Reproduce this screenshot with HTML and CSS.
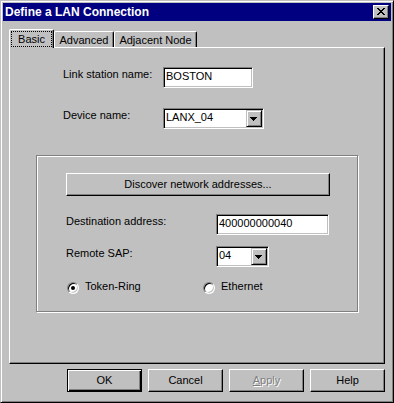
FILE: index.html
```html
<!DOCTYPE html>
<html lang="en">
<head>
    <meta charset="UTF-8">
    <meta name="viewport" content="width=device-width, initial-scale=1.0">
    <title>Define a LAN Connection</title>
    <link rel="stylesheet" href="styles.css">
</head>
<body>
<div class="window">
    <div class="titleBar">
        <span class="titleText">Define a LAN Connection</span>
        <button class="closeButton" aria-label="Close">
            <svg width="8" height="7" viewBox="0 0 8 7" shape-rendering="crispEdges">
                <path fill="#000" d="M0 0h2v1h-2z M6 0h2v1h-2z M1 1h2v1h-2z M5 1h2v1h-2z M2 2h4v1h-4z M3 3h2v1h-2z M2 4h4v1h-4z M1 5h2v1h-2z M5 5h2v1h-2z M0 6h2v1h-2z M6 6h2v1h-2z"></path>
            </svg>
        </button>
    </div>

    <div class="dialogBody">
        <div class="tabs">
            <div class="tab active"><span class="focusRect">Basic</span></div>
            <div class="tab advanced">Advanced</div>
            <div class="tab adjacent">Adjacent Node</div>
        </div>

        <div class="tabPanel">
            <div class="fieldRow">
                <label class="fieldLabel">Link station name:</label>
                <div class="textField stationField">BOSTON</div>
            </div>
            <div class="fieldRow deviceRow">
                <label class="fieldLabel">Device name:</label>
                <div class="comboBox deviceCombo">
                    <span class="comboText">LANX_04</span>
                    <span class="comboButton">
                        <svg width="7" height="4" viewBox="0 0 7 4" shape-rendering="crispEdges">
                            <path fill="#000" d="M0 0h7v1h-7z M1 1h5v1h-5z M2 2h3v1h-3z M3 3h1v1h-1z"></path>
                        </svg>
                    </span>
                </div>
            </div>

            <div class="groupBox">
                <button class="pushButton discoverButton">Discover network addresses...</button>
                <div class="groupRow destinationRow">
                    <label class="fieldLabel wide">Destination address:</label>
                    <div class="textField addressField">400000000040</div>
                </div>
                <div class="groupRow sapRow">
                    <label class="fieldLabel wide">Remote SAP:</label>
                    <div class="comboBox sapCombo">
                        <span class="comboText">04</span>
                        <span class="comboButton">
                            <svg width="7" height="4" viewBox="0 0 7 4" shape-rendering="crispEdges">
                                <path fill="#000" d="M0 0h7v1h-7z M1 1h5v1h-5z M2 2h3v1h-3z M3 3h1v1h-1z"></path>
                            </svg>
                        </span>
                    </div>
                </div>
                <div class="radioRow">
                    <label class="radio">
                        <span class="radioMark checked"></span>
                        <span>Token-Ring</span>
                    </label>
                    <label class="radio">
                        <span class="radioMark"></span>
                        <span>Ethernet</span>
                    </label>
                </div>
            </div>
        </div>

        <div class="dialogButtons">
            <button class="pushButton defaultButton">OK</button>
            <button class="pushButton">Cancel</button>
            <button class="pushButton disabled"><u>A</u>pply</button>
            <button class="pushButton">Help</button>
        </div>
    </div>
</div>
</body>
</html>
```

FILE: styles.css
```css
body {
    margin: 0;
    padding: 0;
    background-color: #c0c0c0;
    font-family: "Liberation Sans", Arial, sans-serif;
    font-size: 11px;
    line-height: 13px;
    color: #000;
}

/* Window frame */
.window {
    box-sizing: border-box;
    width: 394px;
    height: 403px;
    padding: 2px;
    background: #c0c0c0;
    border-top: 1px solid #c0c0c0;
    border-left: 1px solid #c0c0c0;
    border-right: 1px solid #000;
    border-bottom: 1px solid #000;
    box-shadow: inset 1px 1px #fff, inset -1px -1px #808080;
}

/* Title bar */
.titleBar {
    display: flex;
    align-items: center;
    justify-content: space-between;
    height: 18px;
    padding: 0 2px;
    background: #000080;
}

.titleText {
    color: #fff;
    font-weight: bold;
    font-size: 12px;
    line-height: 14px;
}

.closeButton {
    display: flex;
    align-items: center;
    justify-content: center;
    box-sizing: border-box;
    width: 16px;
    height: 14px;
    padding: 0 1px 1px 0;
    margin: 0;
    background: #c0c0c0;
    border-top: 1px solid #fff;
    border-left: 1px solid #fff;
    border-right: 1px solid #000;
    border-bottom: 1px solid #000;
    box-shadow: inset -1px -1px #808080;
}

.dialogBody {
    padding: 8px 6px 0 6px;
}

/* Tabs */
.tabs {
    display: flex;
    align-items: flex-end;
    height: 18px;
}

.tab {
    box-sizing: border-box;
    height: 16px;
    padding-top: 2px;
    text-align: center;
    background: #c0c0c0;
    border-top: 1px solid #fff;
    border-left: 1px solid #fff;
    border-right: 1px solid #000;
    border-top-left-radius: 2px;
    border-top-right-radius: 2px;
    box-shadow: inset -1px 0 #808080;
}

.tab.active {
    position: relative;
    z-index: 1;
    width: 45px;
    height: 19px;
    margin-bottom: -1px;
    padding: 1px 1px 0 1px;
}

.tab.advanced {
    width: 60px;
}

.tab.adjacent {
    width: 83px;
}

.focusRect {
    display: block;
    box-sizing: border-box;
    width: 41px;
    height: 16px;
    padding-top: 1px;
    border: 1px dotted #000;
}

/* Tab panel */
.tabPanel {
    box-sizing: border-box;
    height: 317px;
    padding: 19px 0 0 26px;
    border-top: 1px solid #fff;
    border-left: 1px solid #fff;
    border-right: 1px solid #000;
    border-bottom: 1px solid #000;
    box-shadow: inset -1px -1px #808080;
}

.fieldRow {
    display: flex;
    margin-left: 27px;
}

.deviceRow {
    margin-top: 20px;
}

.fieldLabel {
    width: 100px;
    padding-top: 1px;
}

.fieldLabel.wide {
    width: 150px;
}

/* Sunken controls */
.textField,
.comboBox {
    box-sizing: border-box;
    height: 21px;
    background: #fff;
    border-top: 1px solid #808080;
    border-left: 1px solid #808080;
    border-right: 1px solid #fff;
    border-bottom: 1px solid #fff;
    box-shadow: inset 1px 1px #000, inset -1px -1px #c0c0c0;
}

.textField {
    padding: 2px 2px 0 2px;
}

.stationField {
    width: 90px;
}

.addressField {
    width: 113px;
}

.comboBox {
    display: flex;
    padding: 1px;
}

.deviceCombo {
    width: 101px;
}

.sapCombo {
    width: 53px;
}

.comboText {
    flex: 1;
    padding: 1px 0 0 1px;
}

.comboButton {
    display: flex;
    align-items: center;
    justify-content: center;
    box-sizing: border-box;
    width: 16px;
    padding: 1px 1px 0 0;
    background: #c0c0c0;
    border-top: 1px solid #c0c0c0;
    border-left: 1px solid #c0c0c0;
    border-right: 1px solid #000;
    border-bottom: 1px solid #000;
    box-shadow: inset 1px 1px #fff, inset -1px -1px #808080;
}

/* Group box */
.groupBox {
    box-sizing: border-box;
    width: 322px;
    height: 157px;
    margin-top: 26px;
    padding: 17px 0 0 29px;
    border: 1px solid #808080;
    box-shadow: inset 1px 1px #fff, 1px 1px #fff;
}

.groupRow {
    display: flex;
}

.destinationRow {
    margin-top: 18px;
}

.sapRow {
    margin-top: 11px;
}

.radioRow {
    display: flex;
    margin: 13px 0 0 1px;
}

.radio {
    display: flex;
    align-items: flex-start;
    gap: 6px;
    width: 136px;
}

.radioMark {
    position: relative;
    box-sizing: border-box;
    width: 12px;
    height: 12px;
    margin-top: 2px;
    border-radius: 50%;
    background: #fff;
    border: 1px solid;
    border-color: #808080 #fff #fff #808080;
    box-shadow: inset 1px 1px #000, inset -1px -1px #c0c0c0;
}

.radioMark.checked::after {
    content: '';
    position: absolute;
    top: 3px;
    left: 3px;
    width: 4px;
    height: 4px;
    border-radius: 50%;
    background: #000;
}

/* Push buttons */
.pushButton {
    box-sizing: border-box;
    width: 75px;
    height: 23px;
    margin: 0;
    padding: 0;
    font: inherit;
    color: #000;
    background: #c0c0c0;
    border-top: 1px solid #fff;
    border-left: 1px solid #fff;
    border-right: 1px solid #000;
    border-bottom: 1px solid #000;
    box-shadow: inset -1px -1px #808080;
}

.discoverButton {
    width: 264px;
}

.defaultButton {
    border: 1px solid #000;
    box-shadow: inset 1px 1px #fff, inset -1px -1px #000, inset -2px -2px #808080;
}

.pushButton.disabled {
    color: #808080;
    text-shadow: 1px 1px 0 #fff;
}

.dialogButtons {
    display: flex;
    justify-content: flex-end;
    gap: 6px;
    margin-top: 5px;
}
```
